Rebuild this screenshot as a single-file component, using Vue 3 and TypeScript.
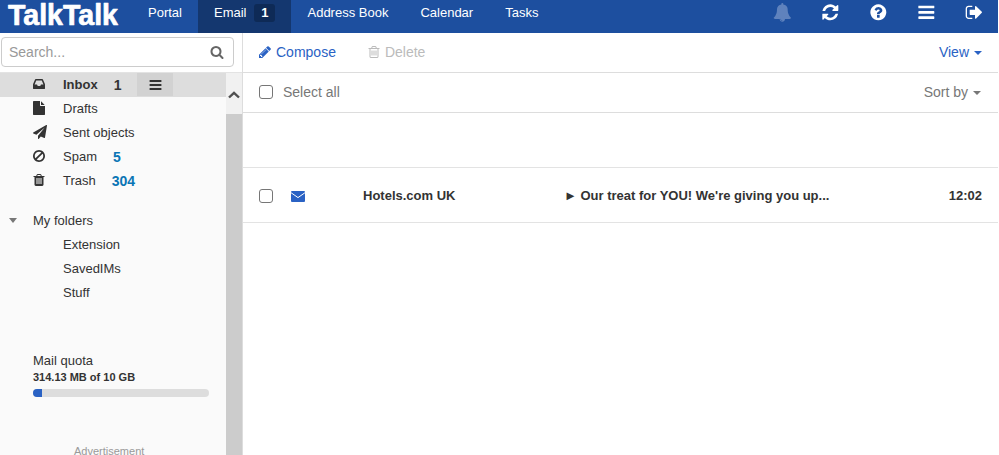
<script setup lang="ts">
const navItems = [
  { label: 'Portal', active: false },
  { label: 'Email', active: true, badge: '1' },
  { label: 'Address Book', active: false },
  { label: 'Calendar', active: false },
  { label: 'Tasks', active: false },
]
const subFolders = ['Extension', 'SavedIMs', 'Stuff']
</script>

<template>
  <div class="page">
    <header class="topbar">
      <svg class="logo" viewBox="0 0 132 33" width="132" height="33">
        <text x="8" y="24.700" textLength="110" lengthAdjust="spacingAndGlyphs">TalkTalk</text>
      </svg>
      <nav class="nav">
        <a v-for="n in navItems" :key="n.label" class="nav-item" :class="{ active: n.active }">
          {{ n.label }}<span v-if="n.badge" class="nav-badge">{{ n.badge }}</span>
        </a>
      </nav>
      <div class="top-icons">
        <svg class="ti bell" viewBox="0 0 1792 1792"><path d="M912 1696q0-16-16-16-59 0-101.500-42.500t-42.500-101.500q0-16-16-16t-16 16q0 73 51.500 124.500t124.500 51.500q16 0 16-16zm816-288q0 52-38 90t-90 38h-448q0 106-75 181t-181 75-181-75-75-181h-448q-52 0-90-38t-38-90q50-42 91-88t85-119.500 74.500-158.500 50-206 19.500-260q0-152 117-282.500t307-158.500q-8-19-8-39 0-40 28-68t68-28 68 28 28 68q0 20-8 39 190 28 307 158.500t117 282.500q0 139 19.500 260t50 206 74.500 158.500 85 119.500 91 88z"/></svg>
        <svg class="ti" viewBox="0 0 1792 1792"><path d="M1639 1056q0 5-1 7-64 268-268 434.500t-478 166.500q-146 0-282.500-55t-243.500-157l-129 129q-19 19-45 19t-45-19-19-45v-448q0-26 19-45t45-19h448q26 0 45 19t19 45-19 45l-137 137q71 66 161 102t187 36q134 0 250-65t186-179q11-17 53-117 8-23 30-23h192q13 0 22.500 9.500t9.500 22.500zm25-800v448q0 26-19 45t-45 19h-448q-26 0-45-19t-19-45 19-45l138-138q-148-137-349-137-134 0-250 65t-186 179q-11 17-53 117-8 23-30 23h-199q-13 0-22.500-9.500t-9.500-22.500v-7q65-268 270-434.500t480-166.500q146 0 284 55.500t245 156.500l130-129q19-19 45-19t45 19 19 45z"/></svg>
        <svg class="ti" viewBox="0 0 1792 1792"><path d="M1024 1376v-192q0-14-9-23t-23-9h-192q-14 0-23 9t-9 23v192q0 14 9 23t23 9h192q14 0 23-9t9-23zm256-672q0-88-55.500-163t-138.500-116-170-41q-243 0-371 213-15 24 8 42l132 100q7 6 19 6 16 0 25-12 53-68 86-92 34-24 86-24 48 0 85.500 26t37.500 59q0 38-20 61t-68 45q-63 28-115.500 86.500t-52.500 125.500v36q0 14 9 23t23 9h192q14 0 23-9t9-23q0-19 21.500-49.500t54.500-49.500q32-18 49-28.500t46-35 44.500-48 28-60.500 12.500-81zm384 192q0 209-103 385.500t-279.500 279.500-385.500 103-385.500-103-279.500-279.500-103-385.500 103-385.500 279.500-279.500 385.500-103 385.500 103 279.500 279.500 103 385.500z"/></svg>
        <svg class="ti" viewBox="0 0 1792 1792"><path d="M1664 1344v128q0 26-19 45t-45 19h-1408q-26 0-45-19t-19-45v-128q0-26 19-45t45-19h1408q26 0 45 19t19 45zm0-512v128q0 26-19 45t-45 19h-1408q-26 0-45-19t-19-45v-128q0-26 19-45t45-19h1408q26 0 45 19t19 45zm0-512v128q0 26-19 45t-45 19h-1408q-26 0-45-19t-19-45v-128q0-26 19-45t45-19h1408q26 0 45 19t19 45z"/></svg>
        <svg class="ti" viewBox="0 0 1792 1792"><path d="M704 1440q0 4 1 20t.5 26.500-3 23.500-10 19.500-20.500 6.500h-320q-119 0-203.500-84.500t-84.500-203.500v-704q0-119 84.500-203.500t203.500-84.500h320q13 0 22.500 9.500t9.500 22.500q0 4 1 20t.5 26.500-3 23.500-10 19.500-20.500 6.500h-320q-66 0-113 47t-47 113v704q0 66 47 113t113 47h312l11.500 1 11.500 3 8 5.500 7 9 2 13.500zm928-544q0 26-19 45l-544 544q-19 19-45 19t-45-19-19-45v-288h-448q-26 0-45-19t-19-45v-384q0-26 19-45t45-19h448v-288q0-26 19-45t45-19 45 19l544 544q19 19 19 45z"/></svg>
      </div>
    </header>

    <div class="body">
      <aside class="sidebar">
        <div class="search-wrap">
          <div class="search">
            <span class="search-ph">Search...</span>
            <svg viewBox="0 0 1792 1792" width="14" height="14"><path fill="#666" d="M1216 832q0-185-131.500-316.500t-316.500-131.500-316.500 131.500-131.500 316.500 131.500 316.500 316.500 131.500 316.500-131.500 131.500-316.500zm512 832q0 52-38 90t-90 38q-54 0-90-38l-343-342q-179 124-399 124-143 0-273.500-55.500t-225-150-150-225-55.500-273.500 55.500-273.500 150-225 225-150 273.500-55.500 273.500 55.500 225 150 150 225 55.500 273.500q0 220-124 399l343 343q37 37 37 90z"/></svg>
          </div>
        </div>
        <div class="side-main">
          <div class="side-content">
            <div class="folder selected">
              <svg class="fi" viewBox="128 0 1792 1792" width="14" height="14"><path d="M1151 960h316q-1-3-2.500-8.500t-2.500-7.500l-212-496h-708l-212 496q-1 3-2.500 8.500t-2.500 7.500h316l95 192h320zm513 30v482q0 26-19 45t-45 19h-1408q-26 0-45-19t-19-45v-482q0-62 25-123l238-552q10-25 36.500-42t52.500-17h832q26 0 52.500 17t36.500 42l238 552q25 61 25 123z"/></svg>
              <span class="fname strong">Inbox</span>
              <span class="count-dark">1</span>
              <span class="menu-btn">
                <svg viewBox="0 0 1792 1792" width="15" height="14"><path d="M1664 1344v128q0 26-19 45t-45 19h-1408q-26 0-45-19t-19-45v-128q0-26 19-45t45-19h1408q26 0 45 19t19 45zm0-512v128q0 26-19 45t-45 19h-1408q-26 0-45-19t-19-45v-128q0-26 19-45t45-19h1408q26 0 45 19t19 45zm0-512v128q0 26-19 45t-45 19h-1408q-26 0-45-19t-19-45v-128q0-26 19-45t45-19h1408q26 0 45 19t19 45z"/></svg>
              </span>
            </div>
            <div class="folder">
              <svg class="fi" viewBox="128 0 1792 1792" width="14" height="14"><path d="M1024 512v-472q22 14 36 28l408 408q14 14 28 36h-472zm-128 32q0 40 28 68t68 28h544v1056q0 40-28 68t-68 28h-1344q-40 0-68-28t-28-68v-1600q0-40 28-68t68-28h800v544z" transform="translate(128 0)"/></svg>
              <span class="fname">Drafts</span>
            </div>
            <div class="folder">
              <svg class="fi" viewBox="0 0 1792 1792" width="14" height="14"><path d="M1764 11q33 24 27 64l-256 1536q-5 29-32 45-14 8-31 8-11 0-24-5l-453-185-242 295q-18 23-49 23-13 0-22-4-19-7-30.500-23.500t-11.500-36.500v-349l864-1059-1069 925-395-162q-37-14-40-55-2-40 32-59l1664-960q15-9 32-9 20 0 36 11z"/></svg>
              <span class="fname">Sent objects</span>
            </div>
            <div class="folder">
              <svg class="fi" viewBox="128 0 1792 1792" width="14" height="14"><path d="M1440 893q0-161-87-295l-754 753q137 89 297 89 111 0 211.500-43.500t173.500-116.500 116-174.500 43-212.500zm-999 299l755-754q-135-91-300-91-148 0-273 73t-198 199-73 274q0 162 89 299zm1223-299q0 157-61 300t-163.500 246-245 164-298.500 61-298.500-61-245-164-163.500-246-61-300 61-299.500 163.500-245.500 245-164 298.500-61 298.500 61 245 164 163.500 245.500 61 299.500z"/></svg>
              <span class="fname">Spam</span>
              <span class="count-blue">5</span>
            </div>
            <div class="folder">
              <svg class="fi" viewBox="128 0 1792 1792" width="14" height="14"><path d="M704 1376v-704q0-14-9-23t-23-9h-64q-14 0-23 9t-9 23v704q0 14 9 23t23 9h64q14 0 23-9t9-23zm256 0v-704q0-14-9-23t-23-9h-64q-14 0-23 9t-9 23v704q0 14 9 23t23 9h64q14 0 23-9t9-23zm256 0v-704q0-14-9-23t-23-9h-64q-14 0-23 9t-9 23v704q0 14 9 23t23 9h64q14 0 23-9t9-23zm-544-992h448l-48-117q-7-9-17-11h-317q-10 2-17 11zm928 32v64q0 14-9 23t-23 9h-96v948q0 83-47 143.500t-113 60.500h-832q-66 0-113-58.500t-47-141.500v-952h-96q-14 0-23-9t-9-23v-64q0-14 9-23t23-9h309l70-167q15-37 54-63t79-26h320q40 0 79 26t54 63l70 167h309q14 0 23 9t9 23z"/></svg>
              <span class="fname">Trash</span>
              <span class="count-blue">304</span>
            </div>

            <div class="my-folders">
              <span class="caret-gray"></span>
              <span>My folders</span>
            </div>
            <div v-for="s in subFolders" :key="s" class="sub">{{ s }}</div>

            <div class="quota">
              <div class="quota-title">Mail quota</div>
              <div class="quota-text">314.13 MB of 10 GB</div>
              <div class="quota-track"><div class="quota-fill" :style="{ width: '5%' }"></div></div>
            </div>
            <div class="ad">Advertisement</div>
          </div>
          <div class="scrollbar">
            <div class="scroll-up">
              <svg viewBox="0 0 12 8" width="12" height="8"><path d="M1 6.500 6 1.800l5 4.700" fill="none" stroke="#505050" stroke-width="2.400"/></svg>
            </div>
          </div>
        </div>
      </aside>

      <main class="main">
        <div class="toolbar">
          <div class="tool compose">
            <svg viewBox="128 0 1792 1792" width="14" height="14"><path d="M491 1536l91-91-235-235-91 91v107h128v128h107zm523-928q0-22-22-22-10 0-17 7l-542 542q-7 7-7 17 0 22 22 22 10 0 17-7l542-542q7-7 7-17zm-54-192l416 416-832 832h-416v-416zm683 96q0 53-37 90l-166 166-416-416 166-165q36-38 90-38 53 0 91 38l235 234q37 39 37 91z"/></svg>
            <span>Compose</span>
          </div>
          <div class="tool del">
            <svg viewBox="128 0 1792 1792" width="14" height="14"><path d="M704 736v576q0 14-9 23t-23 9h-64q-14 0-23-9t-9-23v-576q0-14 9-23t23-9h64q14 0 23 9t9 23zm256 0v576q0 14-9 23t-23 9h-64q-14 0-23-9t-9-23v-576q0-14 9-23t23-9h64q14 0 23 9t9 23zm256 0v576q0 14-9 23t-23 9h-64q-14 0-23-9t-9-23v-576q0-14 9-23t23-9h64q14 0 23 9t9 23zm128 724v-948h-896v948q0 22 7 40.500t14.500 27 10.500 8.500h832q3 0 10.500-8.500t14.500-27 7-40.500zm-672-1076h448l-48-117q-7-9-17-11h-317q-10 2-17 11zm928 32v64q0 14-9 23t-23 9h-96v948q0 83-47 143.500t-113 60.500h-832q-66 0-113-58.500t-47-141.500v-952h-96q-14 0-23-9t-9-23v-64q0-14 9-23t23-9h309l70-167q15-37 54-63t79-26h320q40 0 79 26t54 63l70 167h309q14 0 23 9t9 23z"/></svg>
            <span>Delete</span>
          </div>
          <div class="view">View<span class="caret"></span></div>
        </div>
        <div class="selectbar">
          <span class="check"></span>
          <span class="select-label">Select all</span>
          <span class="sort">Sort by<span class="caret gray"></span></span>
        </div>
        <div class="spacer-row"></div>
        <div class="mail-row">
          <span class="check mail-check"></span>
          <svg class="env" viewBox="0 0 14 11" width="14" height="11"><rect width="14" height="11" rx="1" fill="#2a62c4"/><path d="M0 1.700 7 6.600l7-4.900" fill="none" stroke="#fff" stroke-width="1"/></svg>
          <span class="sender">Hotels.com UK</span>
          <span class="subject">► Our treat for YOU! We're giving you up...</span>
          <span class="time">12:02</span>
        </div>
      </main>
    </div>
  </div>
</template>

<style>
html, body { margin: 0; overflow: hidden; background: #fff; }
</style>

<style scoped>
.page {
  width: 998px;
  height: 455px;
  overflow: hidden;
  display: flex;
  flex-direction: column;
  font-family: "Liberation Sans", Arial, sans-serif;
  font-size: 13px;
  color: #333;
}
.topbar {
  height: 33px;
  flex: none;
  background: #1d4f9f;
  display: flex;
  align-items: stretch;
  color: #fff;
}
.logo { flex: none; display: block; }
.logo text {
  font-family: "Liberation Sans", Arial, sans-serif;
  font-size: 30px;
  font-weight: 700;
  fill: #fff;
  stroke: #fff;
  stroke-width: 0.700px;
  stroke-linejoin: round;
}
.nav { display: flex; }
.nav-item {
  padding: 0 16px;
  line-height: 26px;
  display: flex;
  align-items: flex-start;
  color: #fff;
}
.nav-item.active { background: #14376f; }
.nav-badge {
  margin: 4px 0 0 8px;
  width: 21px;
  height: 18px;
  line-height: 18px;
  text-align: center;
  font-size: 13px;
  font-weight: 700;
  background: #0e2a56;
  border-radius: 3px;
}
.top-icons {
  margin-left: auto;
  display: flex;
  gap: 29.330px;
  padding: 3px 14.300px 0 0;
  align-items: flex-start;
}
.ti { fill: #fff; display: block; width: 18.670px; height: 18.670px; flex: none; }
.bell { fill: #5f82bd; }

.body { flex: 1; display: flex; min-height: 0; }
.sidebar {
  width: 243px;
  flex: none;
  box-sizing: border-box;
  border-right: 1px solid #ddd;
  background: #fafafa;
  display: flex;
  flex-direction: column;
  min-height: 0;
}
.search-wrap {
  height: 40px;
  flex: none;
  padding: 4px 8px 0 1px;
  box-sizing: border-box;
  background: #fff;
  border-bottom: 1px solid #e3e3e3;
}
.search {
  height: 30px;
  box-sizing: border-box;
  border: 1px solid #ccc;
  border-radius: 4px;
  background: #fff;
  display: flex;
  align-items: center;
  justify-content: space-between;
  padding: 0 9px 0 7px;
}
.search svg { display: block; }
.search-ph { color: #999; font-size: 14px; }
.side-main { flex: 1; display: flex; min-height: 0; }
.side-content { flex: 1; min-width: 0; overflow: hidden; }
.folder {
  height: 24px;
  display: flex;
  align-items: center;
  padding-left: 33px;
  padding-bottom: 1px;
  box-sizing: border-box;
}
.folder.selected { background: #ddd; }
.fi { fill: #333; flex: none; display: block; margin-top: -1px; }
.fname { margin-left: 16px; }
.fname.strong { font-weight: 700; }
.count-dark { font-weight: 700; font-size: 14px; margin-left: 16px; }
.menu-btn {
  margin-left: 16px;
  width: 36px;
  height: 23px;
  background: #d2d2d2;
  display: flex;
  align-items: center;
  justify-content: center;
}
.menu-btn svg { fill: #333; display: block; }
.count-blue { font-weight: 700; font-size: 14px; color: #0a75b5; margin-left: 16px; }
.my-folders {
  margin-top: 16px;
  height: 24px;
  display: flex;
  align-items: center;
  padding-left: 9px;
  padding-bottom: 1px;
  box-sizing: border-box;
  gap: 16px;
}
.caret-gray {
  width: 0;
  height: 0;
  border-left: 4px solid transparent;
  border-right: 4px solid transparent;
  border-top: 5px solid #777;
}
.sub { height: 24px; line-height: 23px; padding-left: 63px; }
.quota { margin: 46px 17px 0 33px; }
.quota-title { line-height: 19px; }
.quota-text { font-size: 11px; font-weight: 700; line-height: 15px; }
.quota-track {
  margin-top: 4px;
  height: 8px;
  background: #ddd;
  border-radius: 4px;
  overflow: hidden;
}
.quota-fill { height: 100%; background: #2a62c4; }
.ad {
  margin-top: 47px;
  padding-left: 74px;
  font-size: 11px;
  line-height: 15px;
  color: #999;
}
.scrollbar {
  width: 16px;
  flex: none;
  background: #ccc;
}
.scroll-up {
  height: 41px;
  background: #f1f1f1;
  display: flex;
  justify-content: center;
  padding-top: 18px;
  box-sizing: border-box;
}
.scroll-up svg { display: block; }

.main { flex: 1; min-width: 0; display: flex; flex-direction: column; font-size: 14px; }
.toolbar {
  height: 40px;
  flex: none;
  box-sizing: border-box;
  border-bottom: 1px solid #ddd;
  display: flex;
  align-items: center;
  padding: 0 16px 2px;
}
.tool { display: flex; align-items: center; gap: 3px; }
.tool svg { display: block; }
.compose { color: #2a62c4; }
.compose svg { fill: #2a62c4; }
.del { color: #bbb; margin-left: 32px; }
.del svg { fill: #bbb; }
.view { margin-left: auto; color: #2a62c4; }
.caret {
  display: inline-block;
  width: 0;
  height: 0;
  margin-left: 5px;
  vertical-align: 2px;
  border-left: 4px solid transparent;
  border-right: 4px solid transparent;
  border-top: 4px solid currentColor;
}
.caret.gray { color: #777; }
.selectbar {
  height: 40px;
  flex: none;
  box-sizing: border-box;
  border-bottom: 1px solid #ddd;
  display: flex;
  align-items: center;
  padding: 0 16px 2px;
  color: #777;
}
.check {
  width: 14px;
  height: 14px;
  box-sizing: border-box;
  flex: none;
  border: 1px solid #767676;
  border-radius: 3px;
  background: #fff;
}
.mail-check { margin-top: 2px; }
.select-label { margin-left: 10px; }
.sort { margin-left: auto; margin-right: 1px; }
.spacer-row {
  height: 55px;
  flex: none;
  box-sizing: border-box;
  border-bottom: 1px solid #e3e3e3;
}
.mail-row {
  height: 55px;
  flex: none;
  box-sizing: border-box;
  border-bottom: 1px solid #e3e3e3;
  display: flex;
  align-items: center;
  padding: 0 16px;
  font-size: 13px;
  font-weight: 700;
  color: #333;
}
.env { margin: 3px 0 0 18px; flex: none; display: block; }
.sender { margin-left: 58px; width: 201px; flex: none; }
.subject { flex: 1; min-width: 0; white-space: nowrap; }
.time { flex: none; }
</style>
